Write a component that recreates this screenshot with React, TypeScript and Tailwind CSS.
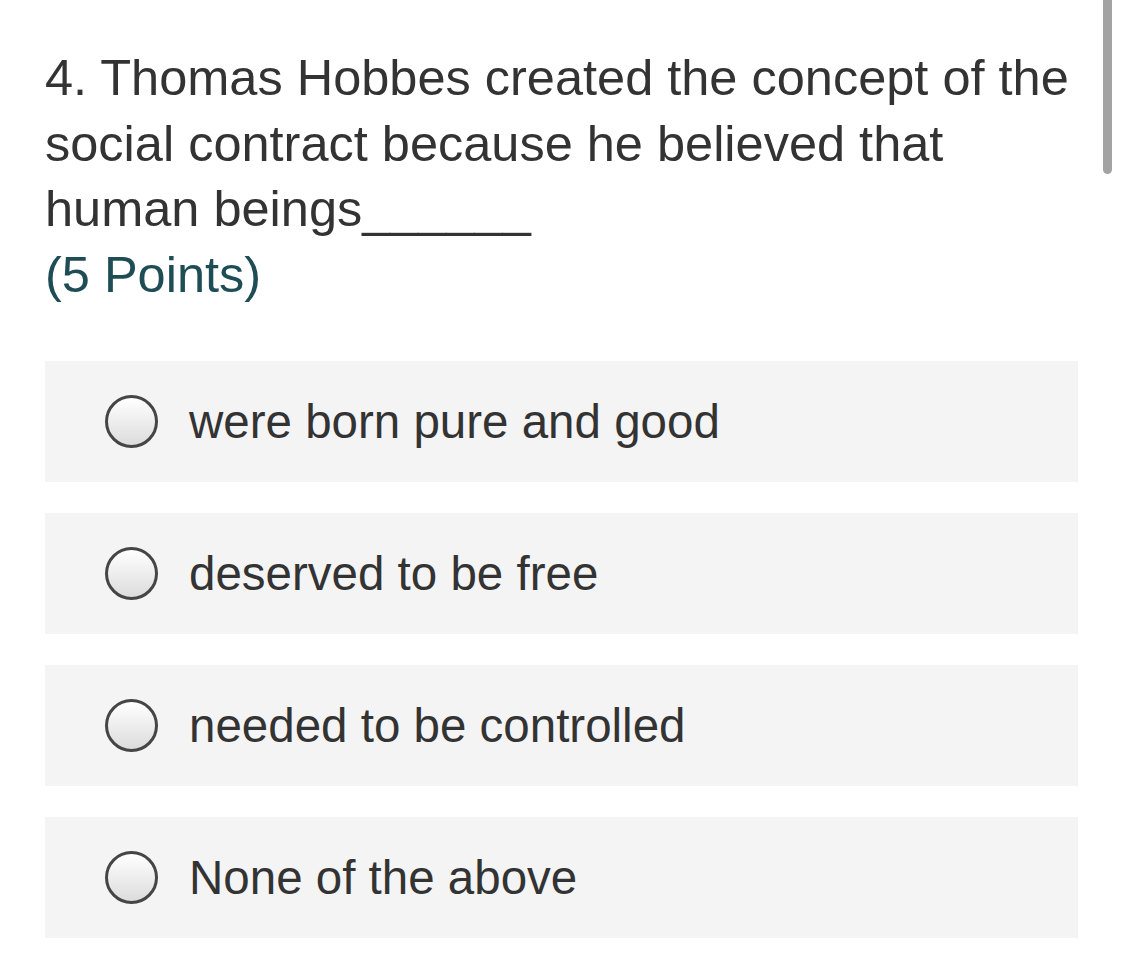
const options = [
  "were born pure and good",
  "deserved to be free",
  "needed to be controlled",
  "None of the above",
]

function Radio() {
  return (
    <span className="block w-[53px] h-[53px] shrink-0 rounded-full border-[3px] border-[#454545] bg-gradient-to-b from-white to-[#dcdcdc]" />
  )
}

export default function App() {
  return (
    <div
      className="relative min-h-[972px] w-[1122px] bg-white text-[#333333] overflow-hidden"
      style={{ fontFamily: '"Liberation Sans", Arial, sans-serif' }}
    >
      {/* scrollbar */}
      <div className="absolute right-[10px] top-0 w-[9px] h-[174px] rounded-b-full bg-[#a3a3a3]" />

      <div className="pl-[45px] pr-[40px] pt-[45px]">
        <h1 className="text-[50.5px] leading-[65.5px] font-normal">
          4. Thomas Hobbes created the concept of the social contract because he believed that human beings______
        </h1>
        <div className="text-[50.5px] leading-[65.5px] text-[#1e4d55]">(5 Points)</div>

        <div className="mt-[54px] mr-[4px] flex flex-col gap-[31px]">
          {options.map((o) => (
            <div key={o} className="h-[121px] bg-[#f4f4f4] flex items-center pl-[60px] gap-[31px]">
              <Radio />
              <span className="text-[47.5px] leading-none">{o}</span>
            </div>
          ))}
        </div>
      </div>
    </div>
  )
}
